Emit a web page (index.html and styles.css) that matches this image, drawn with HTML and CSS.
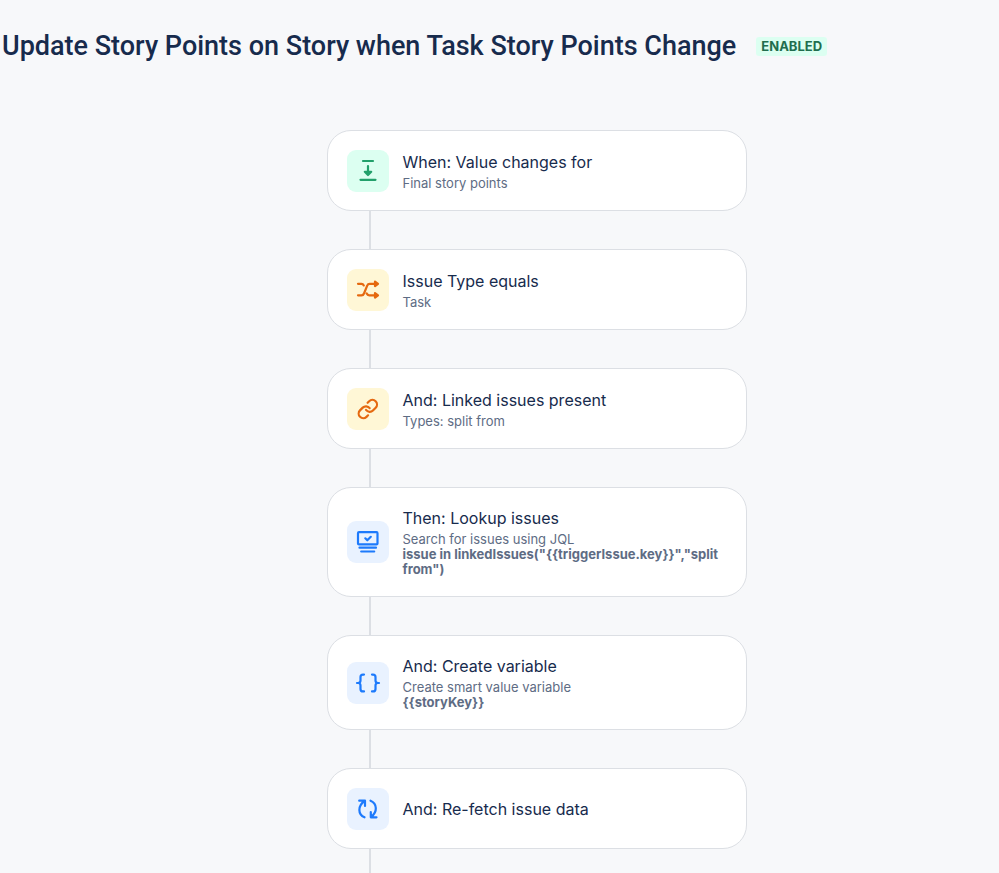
FILE: index.html
```html
<!DOCTYPE html>
<html lang="en">
<head>
<meta charset="utf-8">
<meta name="viewport" content="width=device-width, initial-scale=1">
<title>Update Story Points on Story when Task Story Points Change</title>
<link rel="stylesheet" href="styles.css">
</head>
<body>
<header class="header">
  <h1 class="title">Update Story Points on Story when Task Story Points Change</h1>
  <span class="badge">ENABLED</span>
</header>
<main class="canvas">
  <ol class="flow">
    <li class="step">
      <article class="card">
        <span class="icon green"><svg viewBox="0 0 42 42" stroke-width="2.2" aria-hidden="true"><path d="M16 11h10M13.500 29.800h15M21 16v8"/><path class="fill" d="M17.800 21.800h6.400L21 25z"/></svg></span>
        <div class="text"><h2>When: Value changes for</h2><p>Final story points</p></div>
      </article>
    </li>
    <li class="step">
      <article class="card">
        <span class="icon yellow"><svg viewBox="0 0 42 42" stroke-width="2.2" aria-hidden="true"><path d="M11 14.800h3.500q1.500 0 2.300 1.600M11 26.300h3.500q1.800 0 2.500-1.800l3.200-7.900q.7-1.800 2.500-1.800H29M19.700 24.500q.8 1.800 2.500 1.800H29"/><path class="fill" d="M28 12.500l3 2.300-3 2.300zM28 24l3 2.300-3 2.300z"/></svg></span>
        <div class="text"><h2>Issue Type equals</h2><p>Task</p></div>
      </article>
    </li>
    <li class="step">
      <article class="card">
        <span class="icon yellow"><svg viewBox="0 0 42 42" stroke-width="2.4" aria-hidden="true"><g transform="translate(9.800 10) scale(.92)"><path d="M10 13a5 5 0 0 0 7.540.540l3-3a5 5 0 0 0-7.070-7.070l-1.720 1.710M14 11a5 5 0 0 0-7.540-.540l-3 3a5 5 0 0 0 7.070 7.070l1.710-1.710"/></g></svg></span>
        <div class="text"><h2>And: Linked issues present</h2><p>Types: split from</p></div>
      </article>
    </li>
    <li class="step">
      <article class="card">
        <span class="icon blue"><svg viewBox="0 0 42 42" stroke-width="2.2" aria-hidden="true"><rect x="11" y="11.200" width="19.500" height="12.200" rx="1"/><path d="M18.300 17.300l2 2 3.500-3.500M12.500 26.700H29M14.200 30.500h13"/></svg></span>
        <div class="text"><h2>Then: Lookup issues</h2><p>Search for issues using JQL</p><p><strong>issue in linkedIssues("{{triggerIssue.key}}","split from")</strong></p></div>
      </article>
    </li>
    <li class="step">
      <article class="card">
        <span class="icon blue"><svg viewBox="0 0 42 42" stroke-width="2.2" aria-hidden="true"><path d="M17 12.600h-1q-2.500 0-2.500 2.500V18.500q0 2.500-2.500 2.500h-1H11q2.500 0 2.500 2.500v3.400q0 2.500 2.500 2.500h1M25 12.600h1q2.500 0 2.500 2.500V18.500q0 2.500 2.500 2.500h1H31q-2.500 0-2.500 2.500v3.400q0 2.500-2.500 2.500h-1"/></svg></span>
        <div class="text"><h2>And: Create variable</h2><p>Create smart value variable</p><p><strong>{{storyKey}}</strong></p></div>
      </article>
    </li>
    <li class="step">
      <article class="card">
        <span class="icon blue"><svg viewBox="0 0 42 42" stroke-width="2.2" aria-hidden="true"><path d="M17.500 29.300C10.800 26.500 10.500 18 17.500 13M12.200 12.700H18V18M23.500 12.700C30.200 15.500 30.800 24 24 29M29.500 29.300H23.800V24"/></svg></span>
        <div class="text"><h2>And: Re-fetch issue data</h2></div>
      </article>
    </li>
  </ol>
</main>
</body>
</html>
```
FILE: styles.css
```css
* {
  box-sizing: border-box;
}

body {
  margin: 0;
  background: #f7f8fa;
  color: #172b4d;
  font-family: Inter, "Liberation Sans", sans-serif;
}

h1, h2, p, ol {
  margin: 0;
  padding: 0;
}

.header {
  display: flex;
  align-items: center;
  gap: 20px;
  padding: 28px 2px 0;
}

.title {
  font-family: Roboto, Inter, sans-serif;
  font-size: 27px;
  font-weight: 500;
  line-height: 36px;
}

.badge {
  padding: 0 5px;
  border-radius: 3px;
  background: #dcfff1;
  color: #216e4e;
  font-size: 13px;
  font-weight: 700;
  line-height: 19px;
}

.canvas {
  padding: 66px 0 0 74px;
}

.flow {
  width: 100%;
  max-width: 420px;
  margin: 0 auto;
  list-style: none;
}

.step::after {
  content: "";
  display: block;
  width: 2px;
  height: 38px;
  margin-left: 42px;
  background: #dcdfe4;
}

.step:last-child::after {
  height: 24px;
}

.card {
  display: flex;
  align-items: center;
  gap: 14px;
  min-height: 81px;
  padding: 19px;
  border: 1px solid #dcdfe4;
  border-radius: 24px;
  background: #fff;
}

.icon {
  flex: none;
  width: 42px;
  height: 42px;
  margin: -1px 0;
  border-radius: 9px;
}

.icon svg {
  display: block;
  width: 42px;
  height: 42px;
  fill: none;
  stroke: currentColor;
  stroke-linecap: round;
  stroke-linejoin: round;
}

.icon .fill {
  fill: currentColor;
}

.green {
  background: #dcfff1;
  color: #22a06b;
}

.yellow {
  background: #fff7d6;
  color: #e56910;
}

.blue {
  background: #e9f2ff;
  color: #1d7afc;
}

.text h2 {
  font-size: 16px;
  font-weight: 400;
  line-height: 22px;
}

.text p {
  color: #5e6c84;
  font-size: 13px;
  line-height: 15px;
}

.text h2 + p {
  margin-top: 3px;
}

.text strong {
  font-weight: 700;
}
```
